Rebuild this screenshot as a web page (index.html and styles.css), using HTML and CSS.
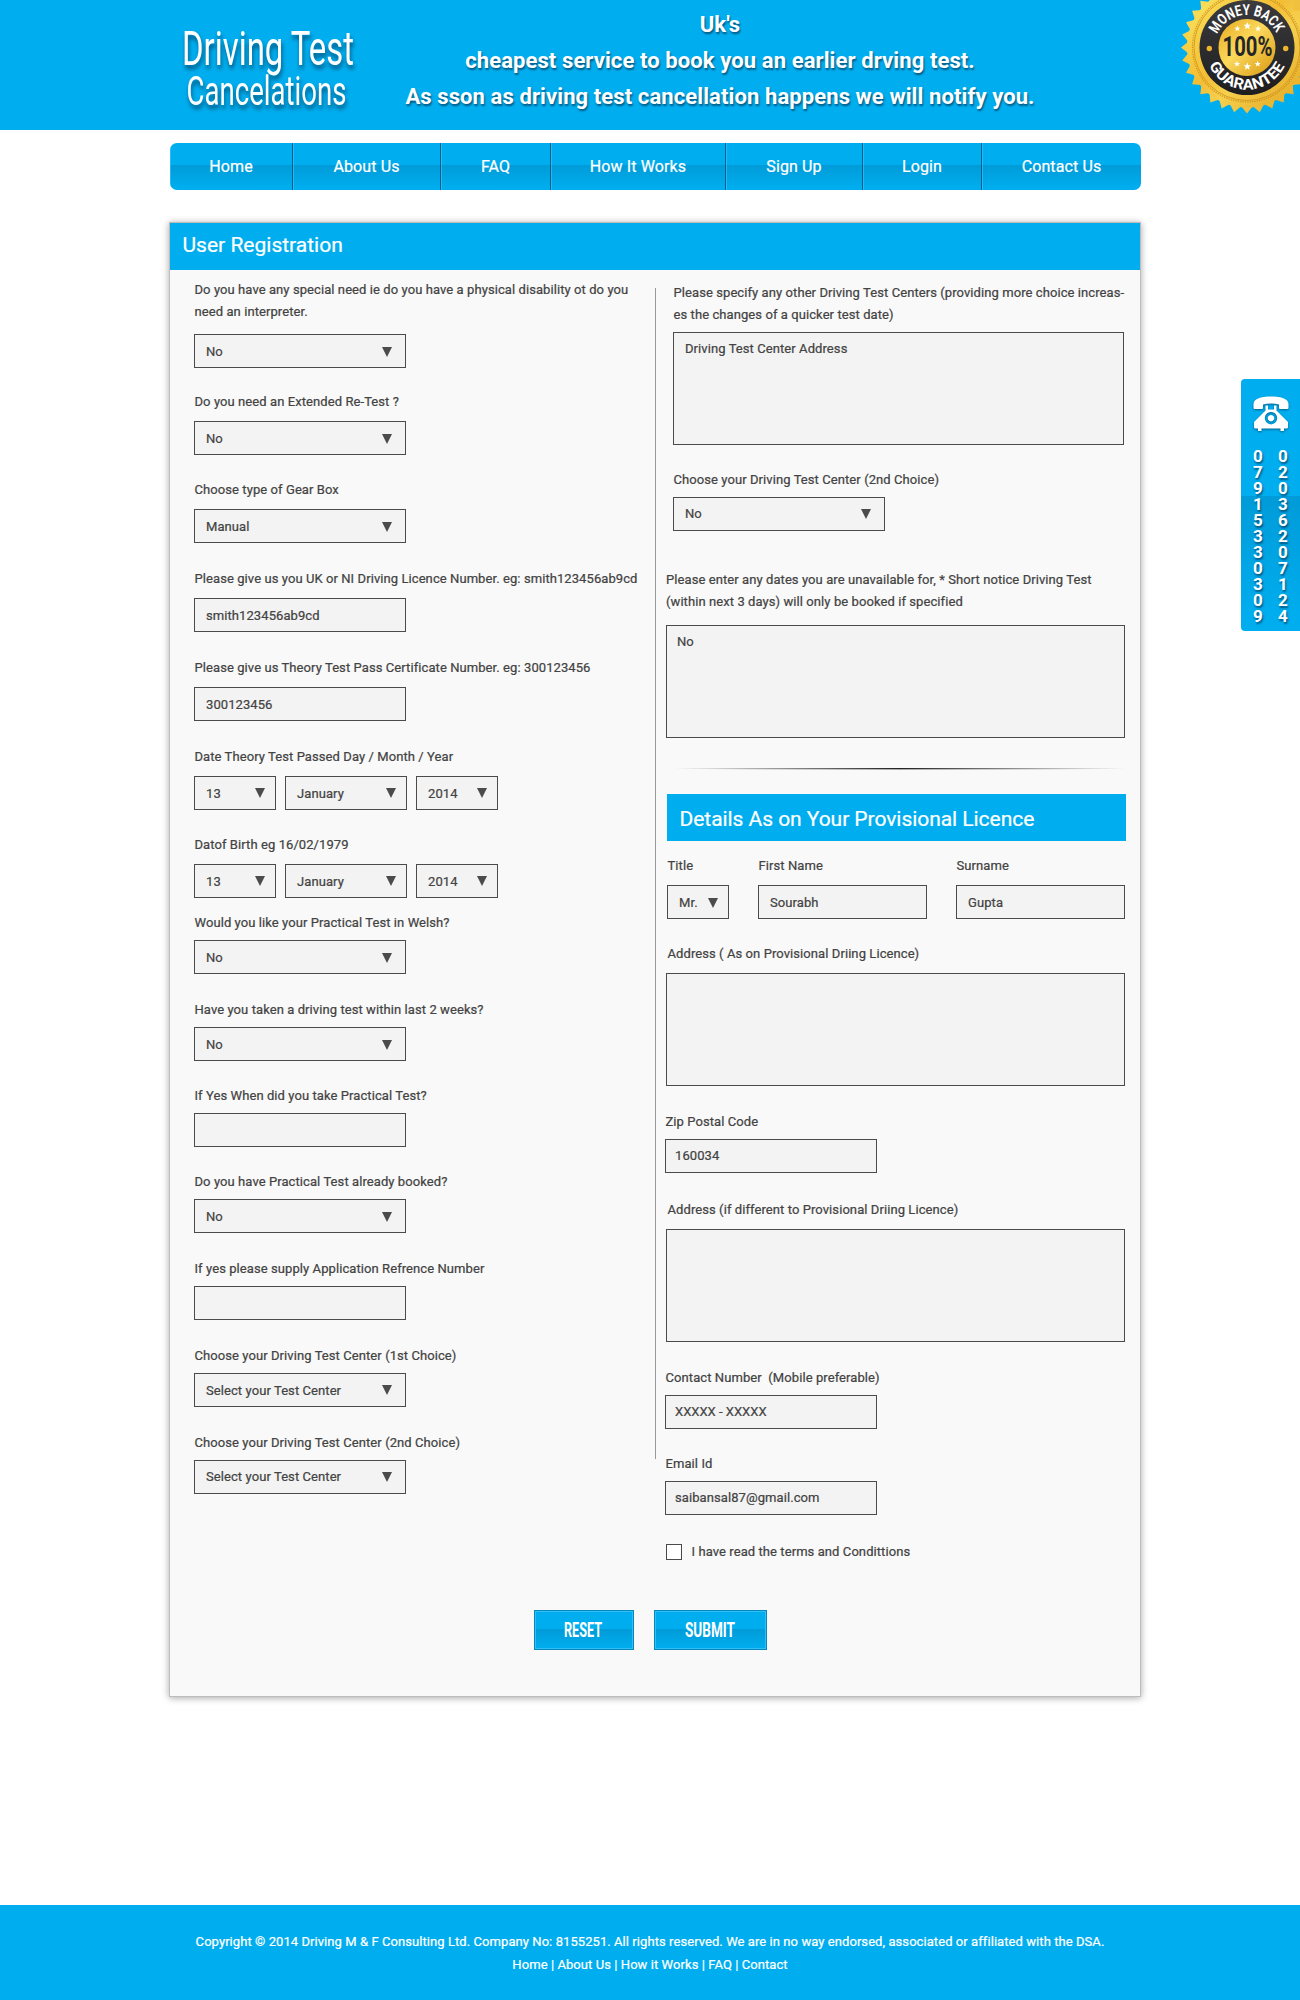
FILE: index.html
```html
<!DOCTYPE html>
<html lang="en">
<head>
<meta charset="utf-8">
<title>Driving Test Cancelations - User Registration</title>
<link rel="stylesheet" href="styles.css">
</head>
<body>
<header class="banner">
  <svg class="logo" width="190" height="110" viewBox="0 0 190 110" role="img" aria-label="Driving Test Cancelations">
    <text class="logo-text logo-text--big" x="10" y="50" textLength="172" lengthAdjust="spacingAndGlyphs">Driving Test</text>
    <text class="logo-text logo-text--small" x="14.500" y="89.500" textLength="160" lengthAdjust="spacingAndGlyphs">Cancelations</text>
  </svg>
  <p class="slogan">Uk's<br>cheapest service to book you an earlier drving test.<br>As sson as driving test cancellation happens we will notify you.</p>
  <svg class="badge" width="130" height="120" viewBox="0 0 130 120">
    <defs>
      <linearGradient id="gold" x1="0" y1="0" x2="1" y2="1">
        <stop offset="0" stop-color="#fff07a"/><stop offset=".25" stop-color="#f6cf45"/><stop offset=".45" stop-color="#f3bd35"/><stop offset=".6" stop-color="#f6d04e"/><stop offset="1" stop-color="#e0a11c"/>
      </linearGradient>
      <linearGradient id="core" x1="0" y1="0" x2="1" y2="1">
        <stop offset="0" stop-color="#e5a91e"/><stop offset=".45" stop-color="#fbd95c"/><stop offset="1" stop-color="#d8960f"/>
      </linearGradient>
      <linearGradient id="ring" x1="0" y1="0" x2="0" y2="1">
        <stop offset="0" stop-color="#3b3b3d"/><stop offset="1" stop-color="#1e1e20"/>
      </linearGradient>
      <path id="arc-top" d="M44.400 47.500a32.600 32.600 0 0 1 65.200 0"/>
      <path id="arc-bottom" d="M35 47.500a42 42 0 0 0 84 0"/>
      <path id="star" d="M0-4 1-1.300 3.800-1.200 1.600.5 2.400 3.200 0 1.700-2.400 3.200-1.600.5-3.800-1.200-1-1.300z"/>
    </defs>
    <path fill="#efc13f" d="M105 0h25v40z"/>
    <g id="seal" transform="translate(77 47.500)">
      <circle r="60" fill="url(#gold)"/>
    </g>
    <circle cx="77" cy="47.500" r="53" fill="none" stroke="#d79c22" stroke-width="1"/>
    <circle cx="77" cy="47.500" r="54.500" fill="none" stroke="#b97d12" stroke-opacity=".7" stroke-width="1.200" stroke-dasharray="1.200 1.200"/>
    <circle cx="77" cy="47.500" r="47.500" fill="url(#ring)"/>
    <circle cx="77" cy="47.500" r="28.500" fill="url(#core)"/>
    <circle cx="39.300" cy="48.500" r="2.700" fill="#eeb52f"/>
    <circle cx="115.700" cy="48.500" r="2.700" fill="#eeb52f"/>
    <text class="badge-arc"><textPath href="#arc-top" startOffset="13.500" textLength="74" lengthAdjust="spacingAndGlyphs">MONEY BACK</textPath></text>
    <text class="badge-arc"><textPath href="#arc-bottom" startOffset="18.500" textLength="94" lengthAdjust="spacingAndGlyphs">GUARANTEE</textPath></text>
    <text class="badge-num" x="52.500" y="56" textLength="50" lengthAdjust="spacingAndGlyphs">100%</text>
    <g fill="#fff">
      <use href="#star" transform="translate(67.300 28.700) scale(.8)"/>
      <use href="#star" x="77.300" y="26"/>
      <use href="#star" transform="translate(88 28.700) scale(.8)"/>
      <use href="#star" transform="translate(67 64) scale(.8)"/>
      <use href="#star" x="77.300" y="66.500"/>
      <use href="#star" transform="translate(87.700 64) scale(.8)"/>
    </g>
  </svg>
</header>

<nav class="nav">
  <a class="nav-item nav-item--home">Home</a>
  <a class="nav-item nav-item--about">About Us</a>
  <a class="nav-item nav-item--faq">FAQ</a>
  <a class="nav-item nav-item--how">How It Works</a>
  <a class="nav-item nav-item--signup">Sign Up</a>
  <a class="nav-item nav-item--login">Login</a>
  <a class="nav-item nav-item--contact">Contact Us</a>
</nav>

<main class="panel">
  <h1 class="panel-title">User Registration</h1>
  <div class="columns">
    <div class="col-left">
      <div class="field field--first"><div class="label">Do you have any special need ie do you have a physical disability ot do you<br>need an interpreter.</div><div class="box select">No</div></div>
      <div class="field field--g23"><div class="label">Do you need an Extended Re-Test ?</div><div class="box select">No</div></div>
      <div class="field field--g24"><div class="label">Choose type of Gear Box</div><div class="box select">Manual</div></div>
      <div class="field"><div class="label">Please give us you UK or NI Driving Licence Number. eg: smith123456ab9cd</div><div class="box">smith123456ab9cd</div></div>
      <div class="field"><div class="label">Please give us Theory Test Pass Certificate Number. eg: 300123456</div><div class="box">300123456</div></div>
      <div class="field"><div class="label">Date Theory Test Passed Day / Month / Year</div>
        <div class="date"><div class="box select box--day">13</div><div class="box select box--month">January</div><div class="box select box--year">2014</div></div></div>
      <div class="field field--g24"><div class="label">Datof Birth eg 16/02/1979</div>
        <div class="date"><div class="box select box--day">13</div><div class="box select box--month">January</div><div class="box select box--year">2014</div></div></div>
      <div class="field field--g14 tight"><div class="label">Would you like your Practical Test in Welsh?</div><div class="box select">No</div></div>
      <div class="field tight"><div class="label">Have you taken a driving test within last 2 weeks?</div><div class="box select">No</div></div>
      <div class="field field--g24 tight"><div class="label">If Yes When did you take Practical Test?</div><div class="box"></div></div>
      <div class="field field--g24 tight"><div class="label">Do you have Practical Test already booked?</div><div class="box select">No</div></div>
      <div class="field tight"><div class="label">If yes please supply Application Refrence Number</div><div class="box"></div></div>
      <div class="field tight"><div class="label">Choose your Driving Test Center (1st Choice)</div><div class="box select select--up">Select your Test Center</div></div>
      <div class="field tight"><div class="label">Choose your Driving Test Center (2nd Choice)</div><div class="box select select--up box--up">Select your Test Center</div></div>
    </div>
    <div class="rule"></div>
    <div class="col-right">
      <div class="indent">
        <div class="label">Please specify any other Driving Test Centers (providing more choice increas-<br>es the changes of a quicker test date)</div>
        <div class="box area area--centers">Driving Test Center Address</div>
        <div class="label label--second">Choose your Driving Test Center (2nd Choice)</div>
        <div class="box select select--up box--up">No</div>
      </div>
      <div class="dates">
        <div class="label">Please enter any dates you are unavailable for, * Short notice Driving Test<br>(within next 3 days) will only be booked if specified</div>
        <div class="box area area--dates">No</div>
      </div>
      <div class="divider"></div>
      <h2 class="sub-title">Details As on Your Provisional Licence</h2>
      <div class="names">
        <div class="name"><div class="label">Title</div><div class="box select box--title">Mr.</div></div>
        <div class="name"><div class="label">First Name</div><div class="box box--name">Sourabh</div></div>
        <div class="name"><div class="label">Surname</div><div class="box box--name">Gupta</div></div>
      </div>
      <div class="address"><div class="label">Address ( As on Provisional Driing Licence)</div><div class="box area"></div></div>
      <div class="short"><div class="label">Zip Postal Code</div><div class="box box--up">160034</div></div>
      <div class="address address--alt"><div class="label">Address (if different to Provisional Driing Licence)</div><div class="box area"></div></div>
      <div class="short"><div class="label">Contact Number &nbsp;(Mobile preferable)</div><div class="box box--up box--phone">XXXXX - XXXXX</div></div>
      <div class="short short--email"><div class="label">Email Id</div><div class="box box--up">saibansal87@gmail.com</div></div>
      <div class="terms"><span class="check"></span><span class="label">I have read the terms and Condittions</span></div>
    </div>
  </div>
  <div class="actions">
    <button class="btn btn--reset"><svg width="40" height="34"><text x="1" y="24" textLength="38" lengthAdjust="spacingAndGlyphs">RESET</text></svg></button>
    <button class="btn btn--submit"><svg width="52" height="34"><text x="0" y="24" textLength="50" lengthAdjust="spacingAndGlyphs">SUBMIT</text></svg></button>
  </div>
</main>

<aside class="phone">
  <svg class="phone-icon" width="36" height="38" viewBox="0 0 36 38">
    <path fill="#fff" fill-rule="evenodd" d="M.5 12V8C.5 3 7 .5 18 .5S35.500 3 35.500 8v4q0 1-1 1H27q-1 0-1-1V8.500q-8-2-16 0V12q0 1-1 1H1.500q-1 0-1-1ZM12.500 9.500H15v4h6v-4h2.500v5L35 26v5q0 1.500-1.500 1.500H31V35h-3.500v-2.500h-19V35H5v-2.500H2.500Q1 32.500 1 31v-5l11.500-11.500ZM18 16a6.200 6.200 0 1 0 .01 0ZM18 19a3.200 3.200 0 1 1-.01 0Z"/>
  </svg>
  <div class="digits">
    <div>0<br>7<br>9<br>1<br>5<br>3<br>3<br>0<br>3<br>0<br>9</div>
    <div>0<br>2<br>0<br>3<br>6<br>2<br>0<br>7<br>1<br>2<br>4</div>
  </div>
</aside>

<footer class="footer">
  <p class="copy">Copyright © 2014 Driving M &amp; F Consulting Ltd. Company No: 8155251. All rights reserved. We are in no way endorsed, associated or affiliated with the DSA.</p>
  <p class="links">Home | About Us | How it Works | FAQ | Contact</p>
</footer>
<script src="seal.js"></script>
</body>
</html>
```
FILE: seal.js
```js
// Builds the toothed edge of the guarantee seal.
(function () {
  var teeth = 32, pts = [];
  for (var i = 0; i < teeth * 2; i++) {
    var r = i % 2 ? 59 : 66;
    var a = Math.PI * i / teeth;
    pts.push((r * Math.cos(a)).toFixed(2) + ',' + (r * Math.sin(a)).toFixed(2));
  }
  var p = document.createElementNS('http://www.w3.org/2000/svg', 'polygon');
  p.setAttribute('points', pts.join(' '));
  p.setAttribute('fill', 'url(#gold)');
  var seal = document.getElementById('seal');
  seal.insertBefore(p, seal.firstChild);
})();
```
FILE: styles.css
```css
* { box-sizing: border-box; }
body {
  margin: 0;
  position: relative;
  height: 2000px;
  display: flex;
  flex-direction: column;
  overflow: hidden;
  background: #fff;
  color: #434343;
  font: 400 13px/22px Roboto, "Liberation Sans", sans-serif;
  letter-spacing: .08px;
  -webkit-text-stroke: .22px currentColor;
}
p, h1, h2 { margin: 0; font-weight: 400; }

.banner {
  position: relative;
  display: flex;
  flex: none;
  height: 130px;
  padding-left: 172px;
  background: #00aeef;
  color: #fff;
  -webkit-text-stroke: 0;
}
.banner svg { letter-spacing: 0; }
.logo { flex: none; margin-top: 15px; overflow: visible; filter: drop-shadow(1px 4px 2px rgba(0, 40, 70, .65)); }
.logo-text { fill: #fff; font-weight: 400; }
.logo-text--big { font-size: 48px; }
.logo-text--small { font-size: 41px; }
.slogan {
  width: 700px;
  margin: 7px 0 0 8px;
  text-align: center;
  font-size: 22px;
  line-height: 36px;
  font-weight: 700;
  letter-spacing: .1px;
  text-shadow: 1px 2px 2px rgba(0, 40, 70, .65);
  white-space: nowrap;
}
.badge { position: absolute; right: 0; top: 0; }
.badge-arc { fill: #fff; font-size: 15px; font-weight: 700; }
.badge-num { fill: #262628; font-size: 28px; font-weight: 700; }

.nav {
  display: flex;
  flex: none;
  width: 971px;
  height: 47px;
  margin: 13px 0 0 170px;
  border-radius: 7px;
  overflow: hidden;
  background: linear-gradient(#00aeef 0 22px, #009bd8 22px, #00adee 44px);
}
.nav-item {
  display: flex;
  align-items: center;
  justify-content: center;
  border-right: 1px solid #005f8c;
  box-shadow: inset 1px 0 rgba(90, 205, 250, .45);
  color: #fff;
  font-size: 16px;
  letter-spacing: .12px;
}
.nav-item--home { width: 123px; }
.nav-item--about { width: 148px; }
.nav-item--faq { width: 110px; }
.nav-item--how { width: 175px; }
.nav-item--signup { width: 137px; }
.nav-item--login { width: 119px; }
.nav-item--contact { width: 159px; border-right: 0; }

.panel {
  flex: none;
  width: 972px;
  height: 1475px;
  margin: 32px 0 0 169px;
  border: 1px solid #bdbdbd;
  background: #f9f9f9;
  box-shadow: 0 1px 7px rgba(0, 0, 0, .35);
}
.panel-title {
  height: 47px;
  padding-left: 12.5px;
  background: #00aeef;
  color: #fff;
  font-size: 21px;
  line-height: 44px;
  letter-spacing: 0;
}
.columns { display: flex; height: 1340px; }
.col-left { width: 485px; padding: 9px 0 0 24px; }
.rule { width: 1px; height: 1171px; margin-top: 18px; background: #999; }
.col-right { width: 484px; padding: 12px 0 0 10px; }

.label { padding-left: .5px; white-space: nowrap; }
.field { margin-top: 25px; }
.field--first { margin-top: 0; }
.field--g23 { margin-top: 23px; }
.field--g24 { margin-top: 24px; }
.field--g14 { margin-top: 14px; }
.field .box { margin-top: 8px; }
.field--first .box { margin-top: 11px; }
.tight .box { margin-top: 6px; }

.box {
  position: relative;
  width: 212px;
  height: 34px;
  padding: 6px 0 0 11px;
  border: 1px solid #4b4b4b;
  background: #f3f3f3;
  line-height: 22px;
}
.box--up { padding-top: 5px; }
.select::after {
  content: "";
  position: absolute;
  top: 12px;
  right: 13px;
  width: 10px;
  height: 10px;
  background: #4b4b4b;
  clip-path: polygon(0 0, 100% 0, 50% 100%);
}
.select--up::after { top: 11px; }
.date { display: flex; gap: 9px; }
.date .select::after { top: 11px; right: 10px; }
.box--day, .box--year { width: 82px; }
.box--month { width: 122px; }

.indent { padding-left: 7px; }
.area { width: 459px; height: 113px; padding-top: 5px; }
.area--centers { width: 451px; margin-top: 6px; }
.area--dates { margin-top: 12px; padding-left: 10px; }
.label--second { margin: 24px 0 6px; }
.dates { margin-top: 38px; }
.dates .label { padding-left: 0; }
.divider {
  width: 450px;
  height: 2px;
  margin: 30px 0 24px 9px;
  background:
    linear-gradient(90deg, transparent, #222 50%, transparent) 0 0 / 100% 1px no-repeat,
    linear-gradient(90deg, transparent 8%, #aaa 50%, transparent 92%) 0 1px / 100% 1px no-repeat;
}
.sub-title {
  width: 459px;
  height: 47px;
  margin-left: 1px;
  padding-left: 12.5px;
  background: #00aeef;
  color: #fff;
  font-size: 21px;
  line-height: 50px;
  letter-spacing: -.05px;
}
.names { display: flex; gap: 29px; margin: 14px 0 0 1px; }
.names .box { margin-top: 8px; }
.box--title { width: 62px; }
.box--title::after { right: 10px; }
.box--name { width: 169px; }
.address { margin-top: 24px; }
.address .box { margin-top: 8px; }
.address .label { padding-left: 1.5px; }
.address--alt { margin-top: 26px; }
.short { margin: 25px 0 0 -1px; }
.short .box { margin-top: 6px; padding-left: 9px; }
.short .box--phone { letter-spacing: 0; }
.short--email { margin-top: 24px; }
.terms { display: flex; margin-top: 26px; }
.check { width: 16px; height: 16px; margin: 3px 9px 0 0; border: 1px solid #4b4b4b; background: #fff; }

.actions { display: flex; gap: 20px; padding-left: 364px; }
.btn {
  display: flex;
  align-items: center;
  justify-content: center;
  height: 40px;
  padding: 0;
  border: 1px solid #0586bd;
  background: linear-gradient(#00aeef 0 18px, #009bd8 18px, #00adee 37px);
  box-shadow: inset 0 0 0 1px #31bef4;
}
.btn text { fill: #fff; font: 700 19.5px Roboto, sans-serif; }
.btn--reset { width: 100px; padding-right: 2px; }
.btn--submit { width: 113px; }

.phone {
  position: absolute;
  right: 0;
  top: 379px;
  width: 59px;
  height: 252px;
  padding-top: 17px;
  border-radius: 4px 0 0 4px;
  background: linear-gradient(#00aeef 0 117px, #009bd8 117px, #00adee 235px);
  color: #fff;
  -webkit-text-stroke: 0;
}
.phone-icon { display: block; margin-left: 12px; filter: drop-shadow(0 1px 1px rgba(0, 40, 70, .6)); }
.digits {
  display: flex;
  gap: 15px;
  padding: 14px 0 0 12px;
  font-size: 17px;
  font-weight: 700;
  line-height: 16px;
  letter-spacing: 0;
  text-shadow: 1px 2px 2px rgba(0, 40, 70, .65);
}
.digits div { width: 10px; text-align: center; }

.footer {
  flex: none;
  height: 95px;
  margin-top: 208px;
  padding-top: 25px;
  background: #00aeef;
  color: #fff;
  text-align: center;
  line-height: 23px;
  letter-spacing: .07px;
  white-space: nowrap;
}
```
